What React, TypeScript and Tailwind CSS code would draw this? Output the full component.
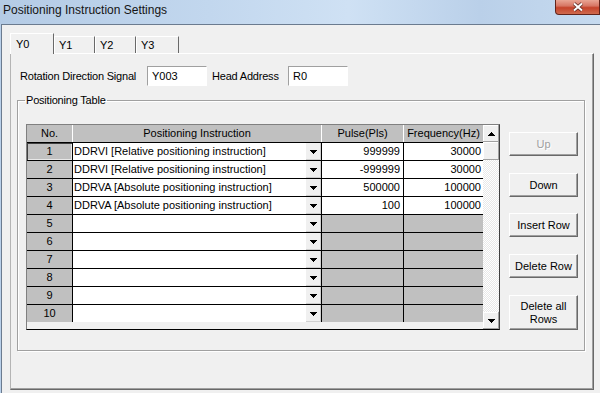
import React from 'react';

type Row = { no: number; ins: string; pulse: string; freq: string };

const rows: Row[] = [
  { no: 1, ins: 'DDRVI [Relative positioning instruction]', pulse: '999999', freq: '30000' },
  { no: 2, ins: 'DDRVI [Relative positioning instruction]', pulse: '-999999', freq: '30000' },
  { no: 3, ins: 'DDRVA [Absolute positioning instruction]', pulse: '500000', freq: '100000' },
  { no: 4, ins: 'DDRVA [Absolute positioning instruction]', pulse: '100', freq: '100000' },
  { no: 5, ins: '', pulse: '', freq: '' },
  { no: 6, ins: '', pulse: '', freq: '' },
  { no: 7, ins: '', pulse: '', freq: '' },
  { no: 8, ins: '', pulse: '', freq: '' },
  { no: 9, ins: '', pulse: '', freq: '' },
  { no: 10, ins: '', pulse: '', freq: '' },
];

function Arrow({ up = false }: { up?: boolean }) {
  return (
    <svg width="7" height="4" viewBox="0 0 7 4" className="block" shapeRendering="crispEdges">
      <path d={up ? 'M0 4h7L3.5 0z' : 'M0 0h7L3.5 4z'} fill="#000" />
    </svg>
  );
}

function Tab({ label, selected, width }: { label: string; selected?: boolean; width: string }) {
  if (selected) {
    return (
      <div className={`${width} h-[21px] -mb-px relative z-10 bg-[#f0f0f0] border-t border-l border-r border-t-white border-l-white border-r-[#696969] pl-[5px] pt-[4px] leading-[13px]`}>
        {label}
      </div>
    );
  }
  return (
    <div className={`${width} h-[17px] bg-[#f0f0f0] border-t border-l border-r border-t-white border-l-white border-r-[#696969] pl-[4px] pt-[2px] leading-[13px]`}>
      {label}
    </div>
  );
}

function WinButton({ label, disabled, className }: { label: React.ReactNode; disabled?: boolean; className: string }) {
  return (
    <button
      className={`w-[69px] bg-[#f0f0f0] border border-t-white border-l-white border-r-[#696969] border-b-[#696969] shadow-[inset_-1px_-1px_0_#a0a0a0] leading-[13px] text-center ${
        disabled ? 'text-[#a0a0a0] [text-shadow:1px_1px_0_#fff]' : 'text-black'
      } ${className}`}
    >
      {label}
    </button>
  );
}

function Grid() {
  return (
    <div className="flex">
      <div className="w-[457px] border-t border-l border-b border-t-[#808080] border-l-[#808080] border-b-black">
        {/* header */}
        <div className="flex h-[17px] bg-[#c0c0c0] leading-[17px] text-center">
          <div className="w-[45px]">No.</div>
          <div className="w-[249px] border-l border-white">Positioning Instruction</div>
          <div className="w-[82px] border-l border-white">Pulse(Pls)</div>
          <div className="w-[80px] border-l border-white">Frequency(Hz)</div>
        </div>
        {rows.map((r) => {
          const filled = r.ins !== '';
          return (
            <div key={r.no} className="flex h-[18px] border-t border-black leading-[17px]">
              <div
                className={`w-[45px] bg-[#c0c0c0] text-center ${
                  r.no === 1 ? 'shadow-[inset_1px_1px_0_#404040,inset_-1px_-1px_0_#e8e8e8]' : ''
                }`}
              >
                {r.no}
              </div>
              <div className="w-[249px] border-l border-black bg-white flex">
                <div className="flex-1 pl-[1px] whitespace-nowrap overflow-hidden">{r.ins}</div>
                <div className="w-[16px] bg-[#f0f0f0] border-l border-white shadow-[inset_-1px_-1px_0_#d0d0d0] flex items-center justify-center pt-[1px]">
                  <Arrow />
                </div>
              </div>
              <div className={`w-[82px] border-l border-black text-right pr-[3px] ${filled ? 'bg-white' : 'bg-[#c0c0c0]'}`}>
                {r.pulse}
              </div>
              <div className={`w-[80px] border-l border-black text-right pr-[2px] ${filled ? 'bg-white' : 'bg-[#c0c0c0]'}`}>
                {r.freq}
              </div>
            </div>
          );
        })}
      </div>
      {/* vertical scrollbar */}
      <div className="w-[17px] flex flex-col border-t border-r border-b border-t-[#808080] border-r-[#404040] border-b-black">
        <div className="h-[17px] bg-[#f0f0f0] shadow-[inset_-1px_-1px_0_#a0a0a0,inset_1px_1px_0_#fff] flex items-center justify-center">
          <Arrow up />
        </div>
        <div className="h-[18px] bg-[#f0f0f0] shadow-[inset_-1px_-1px_0_#a0a0a0,inset_1px_1px_0_#fff]" />
        <div className="flex-1 bg-[image:repeating-conic-gradient(#ffffff_0%_25%,#e8e8e8_0%_50%)] bg-[length:2px_2px]" />
        <div className="h-[17px] bg-[#f0f0f0] shadow-[inset_-1px_-1px_0_#a0a0a0,inset_1px_1px_0_#fff] flex items-center justify-center pt-[1px]">
          <Arrow />
        </div>
      </div>
    </div>
  );
}

export default function App() {
  return (
    <div className="w-[600px] h-[393px] overflow-hidden flex flex-col bg-[#b9d0ea] text-[11px] text-black font-['Liberation_Sans',Arial,sans-serif]">
      {/* title bar */}
      <div className="h-[24px] flex bg-[linear-gradient(90deg,#b4cbe5_0%,#c2d7ee_35%,#cfe1f4_58%,#bad0e9_80%,#c6daef_100%)]">
        <div className="flex-1 pl-[3px] pt-[3px] text-[12px] leading-[14px] text-[#141414]">Positioning Instruction Settings</div>
        <div className="w-[45px] h-[15px] rounded-bl-[4px] border border-t-0 border-[#62231a] bg-[linear-gradient(180deg,#e9a594_0%,#d77664_42%,#c5432b_55%,#cf6a4e_100%)] flex items-center justify-center">
          <svg width="12" height="10" viewBox="0 0 12 10">
            <path d="M2 1.5l8 7M10 1.5l-8 7" stroke="#5a2a24" strokeWidth="3.6" />
            <path d="M2 1.5l8 7M10 1.5l-8 7" stroke="#ffffff" strokeWidth="2" />
          </svg>
        </div>
      </div>

      {/* client area */}
      <div className="flex-1 ml-px border-l border-t border-[#6b7b8f] bg-[#f0f0f0] pl-[8px] pt-[8px]">
        <div className="flex items-end h-[20px]">
          <Tab label="Y0" selected width="w-[44px]" />
          <Tab label="Y1" width="w-[41px]" />
          <Tab label="Y2" width="w-[41px]" />
          <Tab label="Y3" width="w-[43px]" />
        </div>

        <div className="w-[584px] h-[337px] border border-t-white border-l-[#b4b4b4] border-r-[#696969] border-b-[#696969] shadow-[inset_-1px_-1px_0_#a0a0a0] pt-[12px] flex flex-col">
          <div className="ml-[9px] flex items-center h-[20px] tracking-[-0.2px]">
            <div className="w-[127px]">Rotation Direction Signal</div>
            <div className="w-[60px] h-[20px] bg-white border border-t-[#a0a0a0] border-l-[#a0a0a0] border-b-white border-r-white pl-[4px] leading-[18px] tracking-normal">
              Y003
            </div>
            <div className="ml-[5px] w-[76px]">Head Address</div>
            <div className="w-[60px] h-[20px] bg-white border border-t-[#a0a0a0] border-l-[#a0a0a0] border-b-white border-r-white pl-[4px] leading-[18px] tracking-normal">
              R0
            </div>
          </div>

          <fieldset className="mt-[7px] ml-[6px] w-[568px] h-[258px] border border-[#a0a0a0] shadow-[inset_1px_1px_0_#fff,1px_1px_0_#fff]">
            <legend className="ml-[7px] px-[1px] leading-[14px] tracking-[-0.2px]">Positioning Table</legend>
            <div className="flex pl-[8px] pt-[17px]">
              <Grid />
              <div className="ml-[9px] flex flex-col pt-[8px]">
                <WinButton label="Up" disabled className="h-[24px]" />
                <WinButton label="Down" className="h-[24px] mt-[17px]" />
                <WinButton label="Insert Row" className="h-[24px] mt-[16px]" />
                <WinButton label="Delete Row" className="h-[24px] mt-[17px]" />
                <WinButton
                  label={
                    <>
                      Delete all
                      <br />
                      Rows
                    </>
                  }
                  className="h-[35px] mt-[17px]"
                />
              </div>
            </div>
          </fieldset>
        </div>
      </div>
    </div>
  );
}
